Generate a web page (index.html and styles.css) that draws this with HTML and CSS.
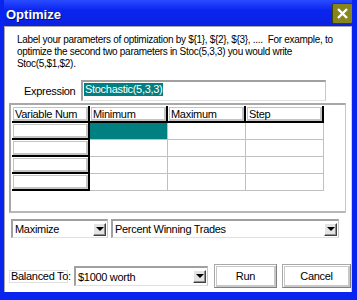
FILE: index.html
```html
<!DOCTYPE html>
<html lang="en">
<head>
    <meta charset="UTF-8">
    <meta name="viewport" content="width=device-width, initial-scale=1.0">
    <title>Optimize</title>
    <link rel="stylesheet" href="styles.css">
</head>
<body>

    <div class="window">
        <div class="titlebar">
            <span class="title">Optimize</span>
            <div class="close">
                <svg width="19" height="19" viewBox="0 0 19 19">
                    <path d="M5 5 L14 14 M14 5 L5 14" stroke="#fff" stroke-width="2.4" fill="none"/>
                </svg>
            </div>
        </div>

        <div class="client">
            <p class="intro">
                Label your parameters of optimization by ${1}, ${2}, ${3}, ....&nbsp; For example, to<br>
                optimize the second two parameters in Stoc(5,3,3) you would write<br>
                Stoc(5,$1,$2).
            </p>

            <div class="expr-row">
                <span class="expr-label">Expression</span>
                <div class="textbox"><span class="selected">Stochastic(5,3,3)</span></div>
            </div>

            <div class="grid-frame">
                <div class="grid">
                    <div class="cell head">Variable Num</div>
                    <div class="cell head">Minimum</div>
                    <div class="cell head">Maximum</div>
                    <div class="cell head">Step</div>

                    <div class="cell fixed"></div>
                    <div class="cell current"></div>
                    <div class="cell"></div>
                    <div class="cell"></div>

                    <div class="cell fixed"></div>
                    <div class="cell"></div>
                    <div class="cell"></div>
                    <div class="cell"></div>

                    <div class="cell fixed"></div>
                    <div class="cell"></div>
                    <div class="cell"></div>
                    <div class="cell"></div>

                    <div class="cell fixed"></div>
                    <div class="cell"></div>
                    <div class="cell"></div>
                    <div class="cell"></div>
                </div>
            </div>

            <div class="combo-row">
                <div class="combo combo-mode">
                    <span class="combo-text">Maximize</span>
                    <span class="drop"></span>
                </div>
                <div class="combo combo-target">
                    <span class="combo-text">Percent Winning Trades</span>
                    <span class="drop"></span>
                </div>
            </div>

            <div class="bottom-row">
                <span class="balance-label">Balanced To:</span>
                <div class="combo combo-balance">
                    <span class="combo-text">$1000 worth</span>
                    <span class="drop"></span>
                </div>
                <button class="btn btn-run">Run</button>
                <button class="btn btn-cancel">Cancel</button>
            </div>
        </div>
    </div>

</body>
</html>
```

FILE: styles.css
```css
body{
    margin: 0;
    font-family: "Liberation Sans", Arial, sans-serif;
    font-size: 11px;
    letter-spacing: -0.3px;
    color: #000;
}

.window{
    width: 357px;
    height: 300px;
    box-sizing: border-box;
    background-color: #0a24f0;
    border-left: 4px solid #0a24f0;
    border-right: 5px solid #0a24f0;
    border-bottom: 8px solid #0a24f0;
    display: flex;
    flex-direction: column;
    overflow: hidden;
}

.titlebar{
    height: 26px;
    flex-shrink: 0;
    display: flex;
    align-items: center;
    justify-content: space-between;
    background: linear-gradient(#2a4cff, #0a24f0 40%, #0a22e0);
    margin-left: -4px;
    margin-right: -5px;
    padding: 0 4px 0 6px;
}

.title{
    color: #fff;
    font-weight: bold;
    font-size: 13px;
    letter-spacing: 0;
    text-shadow: 1px 1px #001070;
    margin-top: 2px;
}

.close{
    width: 19px;
    height: 19px;
    background-color: #86861c;
    border: 1px solid #40400a;
    border-radius: 2px;
    margin-top: 1px;
}

.close svg{
    display: block;
}

.client{
    flex: 1;
    min-width: 0;
    background-color: #fff;
    border-top: 1px solid #a8a8a8;
    border-left: 1px solid #a8a8a8;
    border-right: 1px solid #d0d0d0;
    display: flex;
    flex-direction: column;
}

.intro{
    margin: 7px 0 0 12px;
    font-size: 10px;
    letter-spacing: -0.3px;
    line-height: 12px;
    white-space: nowrap;
}

.expr-row{
    display: flex;
    align-items: center;
    margin-top: 10px;
}

.expr-label{
    margin-left: 19px;
    width: 57px;
    flex-shrink: 0;
}

.textbox{
    width: 245px;
    height: 21px;
    box-sizing: border-box;
    border-top: 2px solid #a0a0a0;
    border-left: 2px solid #a0a0a0;
    border-right: 1px solid #c8c8c8;
    border-bottom: 1px solid #e0e0e0;
    padding: 1px 0 0 1px;
}

.selected{
    display: inline-block;
    background-color: #008080;
    color: #fff;
    line-height: 13px;
    padding: 0 1px;
}

.grid-frame{
    margin: 2px 0 0 4px;
    width: 337px;
    height: 110px;
    box-sizing: border-box;
    border-top: 2px solid #a8a8a8;
    border-left: 2px solid #a8a8a8;
    border-right: 1px solid #c8c8c8;
    border-bottom: 2px solid #b8b8b8;
    padding: 1px 0 0 1px;
}

.grid{
    display: grid;
    grid-template-columns: repeat(4, 78px);
    grid-auto-rows: 17px;
}

.cell{
    box-sizing: border-box;
    border-right: 1px solid #c0c0c0;
    border-bottom: 1px solid #c0c0c0;
}

.head, .fixed{
    border-right: 2px solid #000;
    border-bottom: 2px solid #000;
    box-shadow: inset 1px 1px #fff, inset 0 0 0 2px #c4c4c4;
    padding: 2px 0 0 3px;
    line-height: 12px;
}

.current{
    background-color: #008080;
}

.combo-row{
    display: flex;
    gap: 3px;
    margin: 6px 0 0 6px;
}

.combo{
    height: 19px;
    box-sizing: border-box;
    border-top: 2px solid #a0a0a0;
    border-left: 2px solid #a0a0a0;
    border-right: 1px solid #c8c8c8;
    border-bottom: 1px solid #e0e0e0;
    display: flex;
    align-items: center;
    justify-content: space-between;
    padding: 0 1px 0 2px;
    flex-shrink: 0;
}

.combo-mode{
    width: 97px;
}

.combo-target{
    width: 228px;
}

.combo-balance{
    width: 134px;
    height: 20px;
}

.drop{
    width: 13px;
    height: 13px;
    box-sizing: border-box;
    background-color: #e4e4e4;
    border-top: 1px solid #fff;
    border-left: 1px solid #fff;
    border-right: 1px solid #404040;
    border-bottom: 1px solid #404040;
    box-shadow: inset -1px -1px #909090;
    position: relative;
}

.drop::after{
    content: "";
    position: absolute;
    left: 2px;
    top: 3px;
    border-left: 4px solid transparent;
    border-right: 4px solid transparent;
    border-top: 4px solid #000;
}

.bottom-row{
    display: flex;
    align-items: center;
    margin: 26px 0 0 4px;
}

.balance-label{
    white-space: nowrap;
    padding: 0 1px;
    border: 1px solid #e0e0e0;
    line-height: 11px;
    width: 55px;
    flex-shrink: 0;
    margin-right: 6px;
}

.btn{
    font-family: "Liberation Sans", Arial, sans-serif;
    font-size: 11px;
    letter-spacing: -0.3px;
    height: 24px;
    background-color: #fff;
    border: 1px solid #a8a8a8;
    border-right-color: #808080;
    border-bottom-color: #808080;
    box-shadow: inset 1px 1px #fff, inset 0 0 0 2px #c8c8c8;
    padding: 0;
    flex-shrink: 0;
}

.btn-run{
    width: 63px;
    margin-left: 6px;
}

.btn-cancel{
    width: 69px;
    margin-left: 5px;
}
```
